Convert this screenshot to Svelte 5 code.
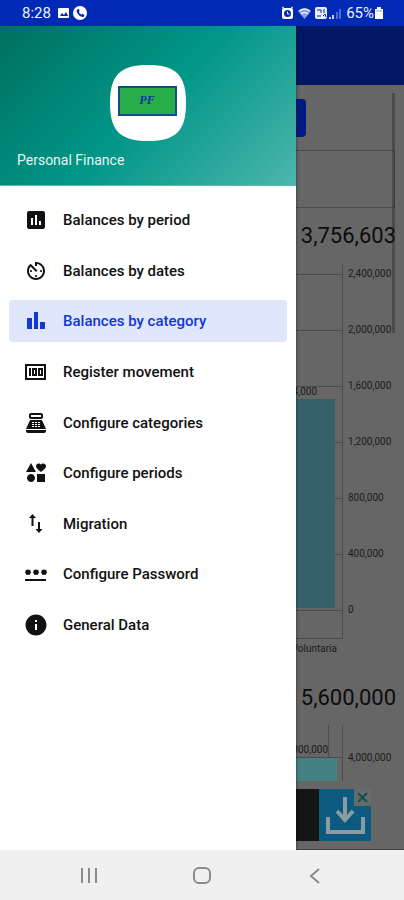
<script lang="ts">
  type Item = { label: string; icon: string };

  const items: Item[] = [
    { label: "Balances by period", icon: "M19 3H5c-1.1 0-2 .9-2 2v14c0 1.1.9 2 2 2h14c1.1 0 2-.9 2-2V5c0-1.1-.9-2-2-2zM9 17H7v-7h2v7zm4 0h-2V7h2v10zm4 0h-2v-4h2v4z" },
    { label: "Balances by dates", icon: "M11 17c0 .55.45 1 1 1s1-.45 1-1-.45-1-1-1-1 .45-1 1zm0-14v4h2V5.08c3.39.49 6 3.39 6 6.92 0 3.87-3.13 7-7 7s-7-3.13-7-7c0-1.68.59-3.22 1.58-4.42L12 13l1.41-1.41-6.8-6.8v.02C4.42 6.45 3 9.05 3 12c0 4.97 4.02 9 9 9 4.97 0 9-4.03 9-9s-4.03-9-9-9h-1zm7 9c0-.55-.45-1-1-1s-1 .45-1 1 .45 1 1 1 1-.45 1-1zM6 12c0 .55.45 1 1 1s1-.45 1-1-.45-1-1-1-1 .45-1 1z" },
    { label: "Balances by category", icon: "M3 9h5v11H3zM16 13h5v7h-5zM10 3h4v17h-4z" },
    { label: "Register movement", icon: "M1 4v16h21V4H1zm2 14V6h17v12H3zM5 8h2v8H5zM8 8v8h5V8H8zm2 2h1v4h-1zM14 8v8h5V8h-5zm2 2h1v4h-1z" },
    { label: "Configure categories", icon: "M17 2H7c-1.1 0-2 .9-2 2v2c0 1.1.9 2 2 2h10c1.1 0 2-.9 2-2V4c0-1.1-.9-2-2-2zm0 4H7V4h10v2zM20 22H4c-1.1 0-2-.9-2-2v-1h20v1c0 1.1-.9 2-2 2zM18.53 10.19C18.21 9.47 17.49 9 16.7 9H7.3c-.79 0-1.51.47-1.83 1.19L2 18h20zM8 11h2v1H8zM8 13h2v1H8zM8 15h2v1H8zM11 11h2v1h-2zM11 13h2v1h-2zM11 15h2v1h-2zM14 11h2v1h-2zM14 13h2v1h-2zM14 15h2v1h-2z" },
    { label: "Configure periods", icon: "M7.02 13c-2.21 0-4 1.79-4 4s1.79 4 4 4 4-1.79 4-4-1.79-4-4-4zM13 13v8h8v-8h-8zM7 2l-5 9h10L7 2zm12.25.5c-1.06 0-1.81.56-2.25 1.17-.44-.61-1.19-1.17-2.25-1.17C13.19 2.5 12 3.78 12 5.25c0 2 2.42 3.42 5 5.75 2.58-2.33 5-3.75 5-5.75 0-1.47-1.19-2.75-2.75-2.75z" },
    { label: "Migration", icon: "M8.5 2L5 6h2.500v8h2V6H12zM14 10v7h-2.500l3.500 4 3.500-4H16v-7z" },
    { label: "Configure Password", icon: "M1 17h21v2H1zM3.500 7l1.200.9 1.500-.2.3 1.500L7 10.500l-.8 1.200-.7 1.300-1.500-.2-1.500.2-.7-1.300L1 10.500l.6-1.200.3-1.500 1.500.1zM11.500 7l1.200.9 1.500-.2.3 1.500.5 1.300-.8 1.200-.7 1.300-1.500-.2-1.500.2-.7-1.300-.8-1.200.6-1.200.3-1.500 1.500.1zM19.500 7l1.200.9 1.500-.2.3 1.500.5 1.300-.8 1.200-.7 1.300-1.500-.2-1.500.2-.7-1.300-.8-1.200.6-1.200.3-1.500 1.500.1z" },
    { label: "General Data", icon: "M12 1.500C6.200 1.500 1.500 6.200 1.500 12S6.200 22.500 12 22.500 22.500 17.800 22.500 12 17.800 1.500 12 1.500zm1 15.500h-2v-6h2v6zm0-8h-2V7h2v2z" },
  ];

  const ticks = ["2,400,000", "2,000,000", "1,600,000", "1,200,000", "800,000", "400,000", "0"];

  let selected = $state("Balances by category");
</script>

<div class="phone">
  <header class="status">
    <span>8:28</span>
    <svg class="left" width="32" height="16" viewBox="0 0 32 16" aria-hidden="true">
      <rect x="1" y="3" width="11" height="10" rx="1" fill="#fff" />
      <path d="M3 11l2-3 2 2 2-3 2 4z" fill="#0029b5" />
      <circle cx="23" cy="8" r="7" fill="#fff" />
      <path d="M20 4.500c-1.500 3 3 8 6.500 7.500l1-2-2.200-1.300-1.200 1.100-2.400-2.500 1-1.200-1-2z" fill="#0029b5" />
    </svg>
    <svg class="right" width="62" height="16" viewBox="0 0 62 16" aria-hidden="true">
      <rect x="1" y="3" width="11" height="11" rx="2" fill="#fff" />
      <circle cx="6.500" cy="8.500" r="3.500" fill="#0029b5" />
      <path d="M6.500 6.500v2.500h2M1 3l2-1M12 3l-2-1" stroke="#fff" fill="none" />
      <path d="M17 6q6.500-5 13 0l-6.500 8z" fill="#8ba0e4" />
      <path d="M18 6q5.500-4 11 0M20 9q3.500-3 7 0" stroke="#e6ebff" stroke-width="1.500" fill="none" />
      <rect x="34" y="2" width="12" height="12" rx="2" fill="#e8edff" />
      <path d="M36 5h4v3M43 4v4M36 11h4M42 11l2-2 1 3" stroke="#0029b5" fill="none" />
      <path d="M48 12h2v2h-2zM51 10h2v4h-2z" fill="#c9d3fa" />
      <path d="M55 7h2v7h-2zM58 4h2v10h-2z" fill="#4f6bd4" />
    </svg>
    <span>65%</span>
    <svg width="10" height="14" viewBox="0 0 10 14" aria-hidden="true">
      <path d="M3 1h4v2h2v10H1V3h2z" fill="#fff" />
      <path d="M2 5h6" stroke="#8ba0e4" />
    </svg>
  </header>

  <div class="stage">
    <main class="page">
      <div class="appbar"></div>
      <div class="scroll">
        <div class="form">
          <div class="actions"><button class="go" aria-label="Search"></button></div>
          <div class="field"></div>
        </div>
        <p class="total">3,756,603</p>
        <svg class="chart" width="404" height="400" viewBox="0 0 404 400" aria-label="Balances chart">
          {#each ticks as tick, i}
            <path class="grid" d="M200 {12 + i * 56}H342" />
            <text x="348" y={15 + i * 56}>{tick}</text>
          {/each}
          <rect x="200" y="137" width="135" height="209" fill="#36616a" />
          <path class="axis" d="M342 2V376H200" />
          <text x="317" y="133" text-anchor="end">1,494,000</text>
          <text x="337" y="390" text-anchor="end">Voluntaria</text>
        </svg>
        <p class="total">5,600,000</p>
        <svg class="chart" width="404" height="60" viewBox="0 0 404 60" aria-label="Totals chart">
          <rect x="200" y="37" width="137" height="23" fill="#438083" />
          <path class="axis" d="M328 4V36M342 4V60M200 36H342" />
          <text x="328" y="32" text-anchor="end">4,000,000</text>
          <text x="348" y="40">4,000,000</text>
        </svg>
      </div>
      <div class="ad">
        <svg width="52" height="52" viewBox="0 0 52 52" aria-hidden="true">
          <rect width="52" height="52" fill="#0d5a80" />
          <path d="M9 28v15h35V28" fill="none" stroke="#8b9ba2" stroke-width="4" />
          <path d="M26 8v22M18 22l8 9 8-9" fill="none" stroke="#8b9ba2" stroke-width="4" />
          <rect x="35" width="17" height="17" fill="#666b6b" />
          <path d="M39 4l9 9M48 4l-9 9" stroke="#14514f" stroke-width="2" />
        </svg>
      </div>
    </main>
    <div class="thumb"></div>

    <aside class="drawer">
      <div class="head">
        <svg class="logo" width="76" height="76" viewBox="0 0 76 76" aria-hidden="true">
          <path d="M38 0C66 0 76 10 76 38S66 76 38 76 0 66 0 38 10 0 38 0z" fill="#fff" />
          <rect x="9" y="22" width="57" height="28" fill="#27ae49" stroke="#174a86" stroke-width="2" />
          <text x="37" y="39" text-anchor="middle">PF</text>
        </svg>
        <span>Personal Finance</span>
      </div>
      <nav>
        {#each items as item}
          <button class="item" class:active={selected === item.label} onclick={() => (selected = item.label)}>
            <svg width="24" height="24" viewBox="0 0 24 24" fill="currentColor" fill-rule="evenodd" aria-hidden="true">
              <path d={item.icon} />
            </svg>
            {item.label}
          </button>
        {/each}
      </nav>
    </aside>
  </div>

  <footer class="navbar">
    <button aria-label="Recent apps">
      <svg width="20" height="20" viewBox="0 0 20 20"><path d="M3 3v15M10 3v15M17 3v15" /></svg>
    </button>
    <button aria-label="Home">
      <svg width="20" height="20" viewBox="0 0 20 20"><rect x="2" y="3" width="16" height="15" rx="5" /></svg>
    </button>
    <button aria-label="Back">
      <svg width="20" height="20" viewBox="0 0 20 20"><path d="M14 4l-8 7 8 7" /></svg>
    </button>
  </footer>
</div>

<style>
  :global(body) {
    margin: 0;
  }
  .phone {
    display: flex;
    flex-direction: column;
    min-height: 100vh;
    font-family: Roboto, "Noto Sans", sans-serif;
    background: #fff;
  }
  button {
    font: inherit;
    border: 0;
    padding: 0;
    background: none;
  }

  .status {
    display: flex;
    align-items: center;
    height: 26px;
    padding: 0 20px 0 22px;
    background: #0029b5;
    color: #eef1ff;
    font-size: 15px;
  }
  .left {
    margin-left: 6px;
  }
  .right {
    margin-left: auto;
    margin-right: 3px;
  }

  .stage {
    position: relative;
    flex: 1;
    display: flex;
  }

  /* page under the open drawer, already dimmed */
  .page {
    flex: 1;
    min-width: 0;
    display: flex;
    flex-direction: column;
    background: #666;
    overflow: hidden;
    border-bottom: 1px solid #444;
    box-sizing: border-box;
  }
  .appbar {
    height: 59px;
    background: #001863;
  }
  .scroll {
    display: flex;
    flex-direction: column;
    align-items: flex-end;
    padding-top: 8px;
  }
  .form {
    align-self: stretch;
    margin-right: 9px;
  }
  .actions {
    display: flex;
    justify-content: flex-end;
    height: 45px;
    padding: 6px 89px;
  }
  .go {
    width: 90px;
    height: 38px;
    border-radius: 4px;
    background: #001a80;
  }
  .field {
    height: 56px;
    border: 1px solid #4b4f4f;
  }
  .total {
    margin: 0;
    padding: 14px 8px 12px 0;
    font-size: 22px;
    line-height: 28px;
    color: #0c0c0c;
  }
  .chart + .total {
    padding: 22px 8px 9px 0;
  }
  .chart {
    display: block;
    font-size: 10px;
    fill: #1c1c1c;
  }
  .grid,
  .axis {
    fill: none;
    stroke: #4c4c4c;
    shape-rendering: crispEdges;
  }
  .ad {
    align-self: flex-end;
    display: flex;
    justify-content: flex-end;
    width: 320px;
    margin: 8px 33px 0 0;
    background: #151515;
  }
  .thumb {
    position: absolute;
    top: 67px;
    right: 9px;
    width: 3px;
    height: 240px;
    background: rgba(24, 32, 32, 0.35);
  }

  .drawer {
    position: absolute;
    top: 0;
    bottom: 0;
    left: 0;
    width: 296px;
    background: #fff;
    box-shadow: 0 0 3px rgba(0, 0, 0, 0.6);
    clip-path: inset(0 -6px 0 0);
  }
  .head {
    display: flex;
    flex-direction: column;
    gap: 9px;
    height: 120px;
    padding: 39px 17px 0;
    border-bottom: 1px solid #5cbcb2;
    background: linear-gradient(135deg, #00705f, #009688 50%, #4db6ac);
    color: #e6f5f3;
    font-size: 14px;
    line-height: 20px;
  }
  .logo {
    align-self: center;
  }
  .logo text {
    font: italic bold 12px "Liberation Serif", serif;
    fill: #1533a8;
  }

  nav {
    display: flex;
    flex-direction: column;
    justify-content: space-between;
    height: 447px;
    margin: 13px 9px 0;
  }
  .item {
    display: flex;
    align-items: center;
    gap: 15px;
    height: 42px;
    padding: 0 15px;
    border-radius: 4px;
    color: #111;
    font-size: 15px;
    font-weight: 500;
    text-align: left;
  }
  .item.active {
    background: #e0e6fb;
    color: #1238d6;
  }

  .navbar {
    display: flex;
    justify-content: center;
    gap: 93px;
    height: 50px;
    background: #f0f0f0;
  }
  .navbar svg {
    display: block;
    fill: none;
    stroke: #8a8a8a;
    stroke-width: 2;
  }
</style>
